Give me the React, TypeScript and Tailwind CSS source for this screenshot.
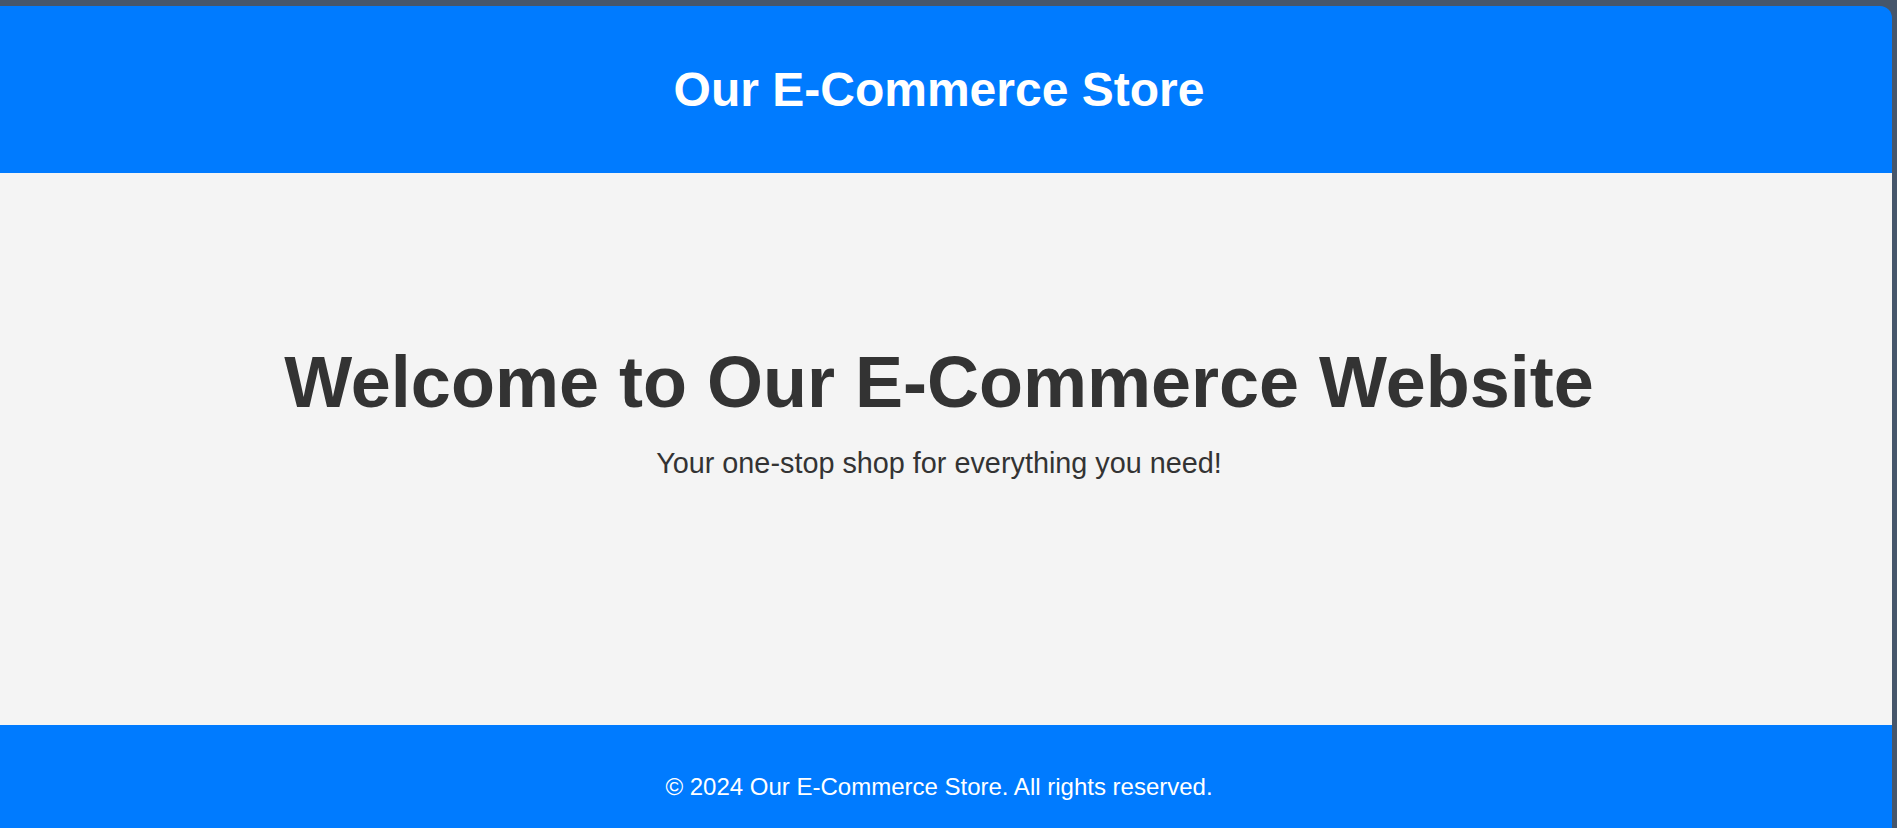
export default function App() {
  return (
    <div className="h-[828px] overflow-hidden bg-[#46566b] pt-[6px] pr-[5px] font-['Liberation_Sans',Arial,sans-serif]">
      <div className="h-full overflow-hidden rounded-tr-[12px] flex flex-col">
        {/* Header */}
        <header className="h-[167px] shrink-0 bg-[#007bff] flex items-center justify-center pr-[14px]">
          <h1 className="text-[48px] leading-[1.15] font-bold text-white">Our E-Commerce Store</h1>
        </header>

        {/* Hero */}
        <main className="h-[552px] shrink-0 bg-[#f4f4f4] pt-[168px] pr-[14px] text-center text-[#333333]">
          <h2 className="text-[72px] leading-[1.15] font-bold">Welcome to Our E-Commerce Website</h2>
          <p className="mt-[23px] text-[28.8px] leading-[1.15]">Your one-stop shop for everything you need!</p>
        </main>

        {/* Footer */}
        <footer className="flex-1 bg-[#007bff] pt-[48px] pb-[46px] pr-[14px] text-center">
          <p className="text-[24px] leading-[1.15] text-white">© 2024 Our E-Commerce Store. All rights reserved.</p>
        </footer>
      </div>
    </div>
  );
}
